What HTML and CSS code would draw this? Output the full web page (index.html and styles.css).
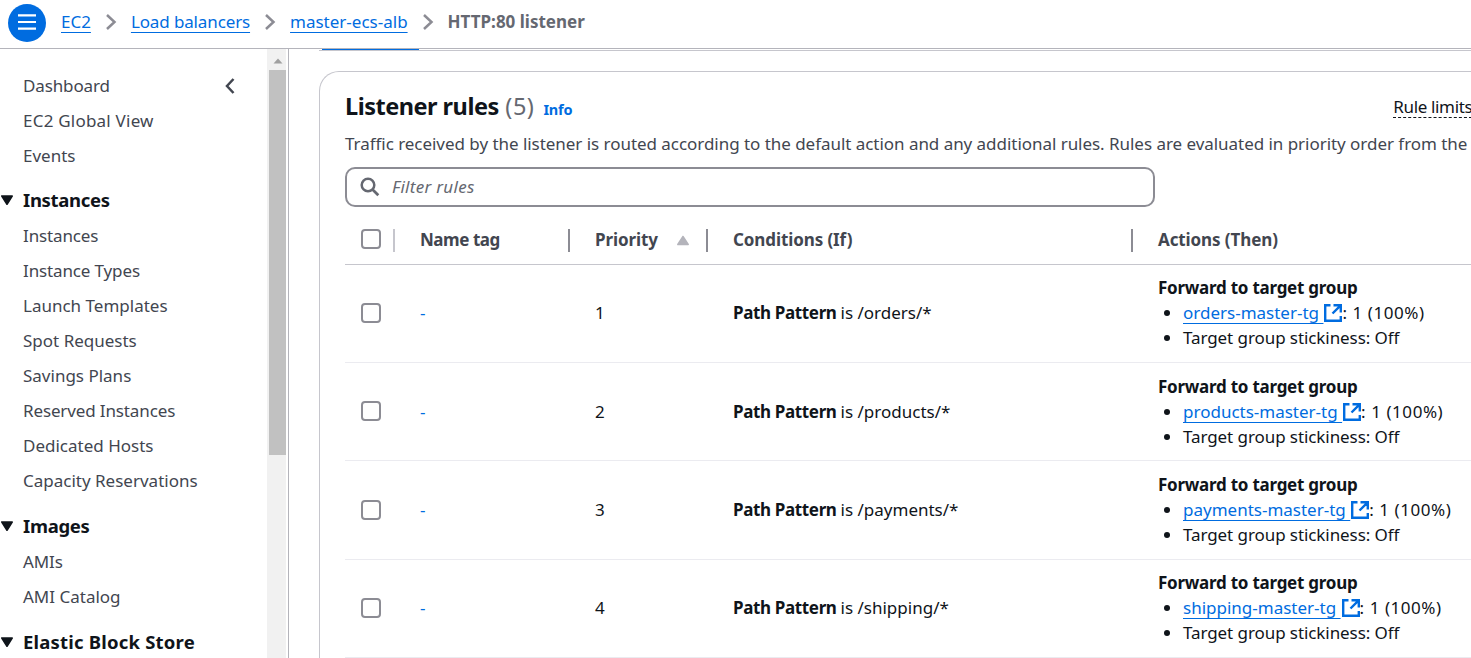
FILE: index.html
```
<!DOCTYPE html>
<html lang="en">
<head>
<meta charset="utf-8">
<title>HTTP:80 listener</title>
<link rel="stylesheet" href="styles.css">
</head>
<body>
<svg class="defs" width="0" height="0">
  <symbol id="chevron" viewBox="0 0 12 18"><path d="M2 2l7.5 7L2 16" fill="none" stroke="currentColor" stroke-width="2.5"/></symbol>
  <symbol id="caret" viewBox="0 0 14 11"><path d="M1.8 1h10.4L7 9.2z" fill="currentColor" stroke="currentColor" stroke-width="1.6" stroke-linejoin="round"/></symbol>
  <symbol id="external" viewBox="0 0 18 18"><path d="M6.500 1.200H1.200v15.600h15.600v-4.800M9.500 1.200h7.300v7.300M16.400 1.600L8.500 9.500" fill="none" stroke="currentColor" stroke-width="2.400"/></symbol>
</svg>
<div class="app">
  <header class="topbar">
    <button class="menu" aria-label="Menu"><svg width="18" height="16" viewBox="0 0 18 16"><path d="M0 1.3h18M0 8h18M0 14.7h18" stroke="#fff" stroke-width="2.2"/></svg></button>
    <nav class="crumbs">
      <a class="link">EC2</a><svg class="sep"><use href="#chevron"/></svg>
      <a class="link tight">Load balancers</a><svg class="sep"><use href="#chevron"/></svg>
      <a class="link">master-ecs-alb</a><svg class="sep"><use href="#chevron"/></svg>
      <span class="current">HTTP:80 listener</span>
    </nav>
  </header>
  <div class="body">
    <aside class="sidebar">
      <nav class="nav">
        <div class="item first"><span class="tight">Dashboard</span><svg class="collapse" width="12" height="18" viewBox="0 0 12 18"><path d="M9.5 2L3 9l6.500 7" fill="none" stroke="currentColor" stroke-width="2.5"/></svg></div>
        <div class="item wide">EC2 Global View</div>
        <div class="item">Events</div>
        <div class="group"><svg class="caret"><use href="#caret"/></svg>Instances</div>
        <div class="item tight">Instances</div>
        <div class="item tight">Instance Types</div>
        <div class="item">Launch Templates</div>
        <div class="item">Spot Requests</div>
        <div class="item">Savings Plans</div>
        <div class="item tight">Reserved Instances</div>
        <div class="item">Dedicated Hosts</div>
        <div class="item">Capacity Reservations</div>
        <div class="group later"><svg class="caret"><use href="#caret"/></svg>Images</div>
        <div class="item tight">AMIs</div>
        <div class="item">AMI Catalog</div>
        <div class="group later loose"><svg class="caret"><use href="#caret"/></svg>Elastic Block Store</div>
      </nav>
      <div class="scroll"><svg class="up" width="10" height="6" viewBox="0 0 10 6"><path d="M5 0.500l4.500 5h-9z" fill="#a0a0a0"/></svg><div class="thumb"></div></div>
    </aside>
    <main class="main">
      <div class="tabs"><div class="tab-active"></div></div>
      <section class="panel">
        <div class="head"><h2>Listener rules <span class="count">(5)</span></h2><a class="info">Info</a><span class="limits">Rule limits</span></div>
        <p class="desc">Traffic received by the listener is routed according to the default action and any additional rules. Rules are evaluated in priority order from the</p>
        <div class="filter"><svg width="20" height="20" viewBox="0 0 20 20"><circle cx="8" cy="8" r="6.300" fill="none" stroke="currentColor" stroke-width="2.500"/><path d="M12.500 12.500l5.800 5.800" stroke="currentColor" stroke-width="2.700"/></svg><span>Filter rules</span></div>
        <div class="table">
          <div class="row thead">
            <div class="cell pick"><i class="box"></i><i class="divider pale"></i></div>
            <div class="cell"><span class="name-label">Name tag</span><i class="divider"></i></div>
            <div class="cell"><span class="head-label">Priority</span><svg class="sort" width="14" height="11" viewBox="0 0 14 11"><path d="M7 1.500L1.800 9.500h10.400z" fill="currentColor" stroke="currentColor" stroke-width="1.500" stroke-linejoin="round"/></svg><i class="divider"></i></div>
            <div class="cell"><span class="head-label">Conditions (If)</span><i class="divider"></i></div>
            <div class="cell"><span class="head-label">Actions (Then)</span></div>
          </div>
          <div class="row">
            <div class="cell pick"><i class="box"></i></div><div class="cell text dash">-</div><div class="cell text">1</div>
            <div class="cell text"><b class="pattern">Path Pattern</b><span>is /orders/*</span></div>
            <div class="cell action"><b>Forward to target group</b><ul><li><a class="link">orders-master-tg&nbsp;</a><svg class="ext"><use href="#external"/></svg><span class="weight">: 1 (100%)</span></li><li class="sticky">Target group stickiness: Off</li></ul></div>
          </div>
          <div class="row">
            <div class="cell pick"><i class="box"></i></div><div class="cell text dash">-</div><div class="cell text">2</div>
            <div class="cell text"><b class="pattern">Path Pattern</b><span>is /products/*</span></div>
            <div class="cell action"><b>Forward to target group</b><ul><li><a class="link">products-master-tg&nbsp;</a><svg class="ext"><use href="#external"/></svg><span class="weight">: 1 (100%)</span></li><li class="sticky">Target group stickiness: Off</li></ul></div>
          </div>
          <div class="row">
            <div class="cell pick"><i class="box"></i></div><div class="cell text dash">-</div><div class="cell text">3</div>
            <div class="cell text"><b class="pattern">Path Pattern</b><span>is /payments/*</span></div>
            <div class="cell action"><b>Forward to target group</b><ul><li><a class="link">payments-master-tg&nbsp;</a><svg class="ext"><use href="#external"/></svg><span class="weight">: 1 (100%)</span></li><li class="sticky">Target group stickiness: Off</li></ul></div>
          </div>
          <div class="row">
            <div class="cell pick"><i class="box"></i></div><div class="cell text dash">-</div><div class="cell text">4</div>
            <div class="cell text"><b class="pattern">Path Pattern</b><span>is /shipping/*</span></div>
            <div class="cell action"><b>Forward to target group</b><ul><li><a class="link">shipping-master-tg&nbsp;</a><svg class="ext"><use href="#external"/></svg><span class="weight">: 1 (100%)</span></li><li class="sticky">Target group stickiness: Off</li></ul></div>
          </div>
        </div>
      </section>
    </main>
  </div>
</div>
</body>
</html>
```
FILE: styles.css
```
* { box-sizing: border-box; }
body { margin: 0; background: #fff; color: #0f141a; font: 17px/25px "Noto Sans", "Open Sans", sans-serif; }
.defs { display: block; height: 0; }
.app { display: flex; flex-direction: column; height: 658px; overflow: hidden; white-space: nowrap; }

.topbar { display: flex; flex: none; align-items: center; height: 49px; padding: 0 8px 3px; border-bottom: 1px solid #b4b4bb; }
.menu { display: flex; align-items: center; justify-content: center; width: 38px; height: 38px; padding: 0 0 1px; border: 0; border-radius: 50%; background: #006ce0; }
.crumbs { display: flex; align-items: center; margin-left: 15px; padding-bottom: 3px; }
.link { color: #006ce0; text-decoration: underline; text-decoration-thickness: 1px; text-underline-offset: 4px; text-decoration-skip-ink: none; }
.tight { letter-spacing: -0.13px; }
.sep { width: 12px; height: 18px; margin: 1px 14px 0 14px; color: #8c8c94; }
.current { color: #656871; font-weight: 700; }

.body { display: flex; flex: 1; min-height: 0; }
.sidebar { display: flex; flex: none; width: 289px; border-right: 1px solid #b4b4bb; }
.nav { flex: 1; padding-top: 19px; }
.item { height: 35px; padding-left: 23px; line-height: 35px; color: #424650; }
.first { display: flex; align-items: center; justify-content: space-between; padding-right: 31px; }
.wide { letter-spacing: 0.22px; }
.collapse { color: #424650; }
.group { display: flex; align-items: center; height: 45px; padding-top: 7px; font-size: 18.5px; font-weight: 700; letter-spacing: -0.3px; }
.later { height: 46px; padding-top: 9px; }
.loose { letter-spacing: 0.2px; }
.caret { width: 14px; height: 11px; margin: 2px 9px 0 0; }
.scroll { width: 19px; margin-right: 2px; padding: 9px 0 0 2px; background: #f1f1f1; }
.up { display: block; margin-left: 4px; }
.thumb { width: 17px; height: 385px; margin-top: 6px; background: #c1c1c1; }

.main { flex: 1; min-width: 0; padding-left: 30px; }
.tabs { height: 2px; border-bottom: 1px solid #c6c6cd; }
.tab-active { width: 97px; height: 1px; margin-left: 3px; background: #006ce0; }
.panel { height: 700px; margin-top: 20px; padding: 20px 0 0 25px; border: 1px solid #c6c6cd; border-right: 0; border-radius: 20px 0 0 0; }
.head { display: flex; align-items: baseline; height: 39px; line-height: 29px; }
h2 { margin: 0; font-size: 23.5px; line-height: 29px; letter-spacing: -0.5px; }
.count { margin-left: 1px; color: #656871; font-weight: 400; letter-spacing: 0.5px; }
.info { margin-left: 9px; color: #006ce0; font-size: 14.5px; font-weight: 700; letter-spacing: -0.2px; }
.limits { align-self: flex-start; margin: 4px 0 0 821px; border-bottom: 1px dashed #0f141a; line-height: 21px; letter-spacing: -0.35px; }
.desc { margin: 0; color: #424650; letter-spacing: -0.04px; }
.filter { display: flex; align-items: center; width: 810px; height: 40px; margin-top: 11px; padding-left: 13px; border: 2px solid #8c8c94; border-radius: 10px; color: #656871; font-style: italic; }
.filter span { margin: 0 0 2px 12px; letter-spacing: 0.3px; }

.row { display: grid; grid-template-columns: 50px 175px 138px 425px 1fr; height: 98.4px; border-bottom: 1px solid #ebebf0; }
.cell { display: flex; align-items: center; padding-left: 25px; }
.text { padding-bottom: 1px; }
.pick { padding-left: 16px; }
.thead { height: 57.5px; border-bottom-color: #c6c6cd; color: #424650; font-weight: 700; }
.thead .cell { padding-top: 10px; }
.thead .box { margin-bottom: 2px; }
.thead .name-label, .thead .head-label { margin-bottom: 1px; }
.name-label { letter-spacing: -0.45px; }
.head-label { letter-spacing: -0.1px; }
.box { width: 20px; height: 20px; border: 2px solid #8c8c94; border-radius: 4px; }
.row:not(.thead) .box { margin-bottom: 0.5px; }
.divider { width: 2px; height: 23px; margin-left: auto; background: #8c8c94; }
.pale { background: #c6c6cd; }
.sort { margin: 0 0 0 18px; color: #b4b4bb; }
.dash { color: #006ce0; }
.pattern { margin-right: 4px; letter-spacing: -0.36px; }
.action { display: block; padding-top: 10.8px; }
.action b { display: block; letter-spacing: -0.25px; }
.action ul { margin: 0; padding-left: 25px; }
.sticky { letter-spacing: -0.08px; }
.ext { width: 18px; height: 18px; margin-left: 1px; color: #006ce0; vertical-align: -3px; }
.weight { letter-spacing: 0.55px; }
```
